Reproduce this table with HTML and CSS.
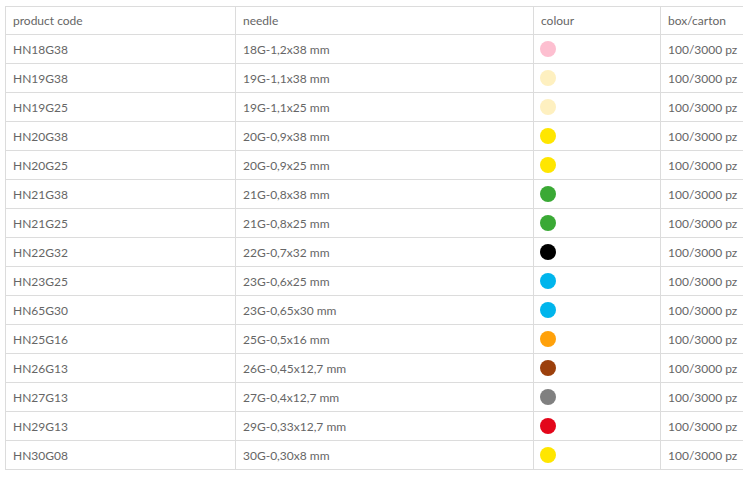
FILE: index.html
```html
<!DOCTYPE html>
<html>
<head>
<meta charset="utf-8">
<link rel="stylesheet" href="styles.css">
</head>
<body>
<div class="wrap">
<table class="spec">
  <thead>
    <tr><th class="c1">product code</th><th class="c2">needle</th><th class="c3">colour</th><th class="c4">box/carton</th></tr>
  </thead>
  <tbody>
    <tr><td>HN18G38</td><td>18G-1,2x38 mm</td><td><span class="dot pink"></span></td><td>100/3000 pz</td></tr>
    <tr><td>HN19G38</td><td>19G-1,1x38 mm</td><td><span class="dot cream"></span></td><td>100/3000 pz</td></tr>
    <tr><td>HN19G25</td><td>19G-1,1x25 mm</td><td><span class="dot cream"></span></td><td>100/3000 pz</td></tr>
    <tr><td>HN20G38</td><td>20G-0,9x38 mm</td><td><span class="dot yellow"></span></td><td>100/3000 pz</td></tr>
    <tr><td>HN20G25</td><td>20G-0,9x25 mm</td><td><span class="dot yellow"></span></td><td>100/3000 pz</td></tr>
    <tr><td>HN21G38</td><td>21G-0,8x38 mm</td><td><span class="dot green"></span></td><td>100/3000 pz</td></tr>
    <tr><td>HN21G25</td><td>21G-0,8x25 mm</td><td><span class="dot green"></span></td><td>100/3000 pz</td></tr>
    <tr><td>HN22G32</td><td>22G-0,7x32 mm</td><td><span class="dot black"></span></td><td>100/3000 pz</td></tr>
    <tr><td>HN23G25</td><td>23G-0,6x25 mm</td><td><span class="dot blue"></span></td><td>100/3000 pz</td></tr>
    <tr><td>HN65G30</td><td>23G-0,65x30 mm</td><td><span class="dot blue"></span></td><td>100/3000 pz</td></tr>
    <tr><td>HN25G16</td><td>25G-0,5x16 mm</td><td><span class="dot orange"></span></td><td>100/3000 pz</td></tr>
    <tr><td>HN26G13</td><td>26G-0,45x12,7 mm</td><td><span class="dot brown"></span></td><td>100/3000 pz</td></tr>
    <tr><td>HN27G13</td><td>27G-0,4x12,7 mm</td><td><span class="dot grey"></span></td><td>100/3000 pz</td></tr>
    <tr><td>HN29G13</td><td>29G-0,33x12,7 mm</td><td><span class="dot red"></span></td><td>100/3000 pz</td></tr>
    <tr><td>HN30G08</td><td>30G-0,30x8 mm</td><td><span class="dot yellow"></span></td><td>100/3000 pz</td></tr>
  </tbody>
</table>
</div>
</body>
</html>
```

FILE: styles.css
```css
html, body {
  margin: 0;
  padding: 0;
  background: #fff;
  overflow: hidden;
}
.wrap {
  padding: 6px 0 0 5px;
  width: 738px;
  overflow: hidden;
}
.spec {
  border-collapse: collapse;
  width: 746px;
  table-layout: fixed;
  font-family: "Lato", "Liberation Sans", sans-serif;
  font-size: 12px;
  color: #666;
}
.spec th, .spec td {
  border: 1px solid #dcdcdc;
  text-align: left;
  font-weight: normal;
  padding: 0 6px 0 7px;
  vertical-align: middle;
  white-space: nowrap;
}
.spec th {
  height: 27px;
}
.spec td {
  height: 28px;
}
.c1 { width: 216px; }
.c2 { width: 284px; }
.c3 { width: 113px; }
.c4 { width: auto; }
.dot {
  display: block;
  width: 16px;
  height: 16px;
  border-radius: 50%;
  margin-left: -1px;
}
.pink { background: #fdbfd0; }
.cream { background: #fef0c0; }
.yellow { background: #ffe600; }
.green { background: #3aa935; }
.black { background: #000; }
.blue { background: #00b5ec; }
.orange { background: #ffa10a; }
.brown { background: #9c400c; }
.grey { background: #808080; }
.red { background: #e3061a; }
```
